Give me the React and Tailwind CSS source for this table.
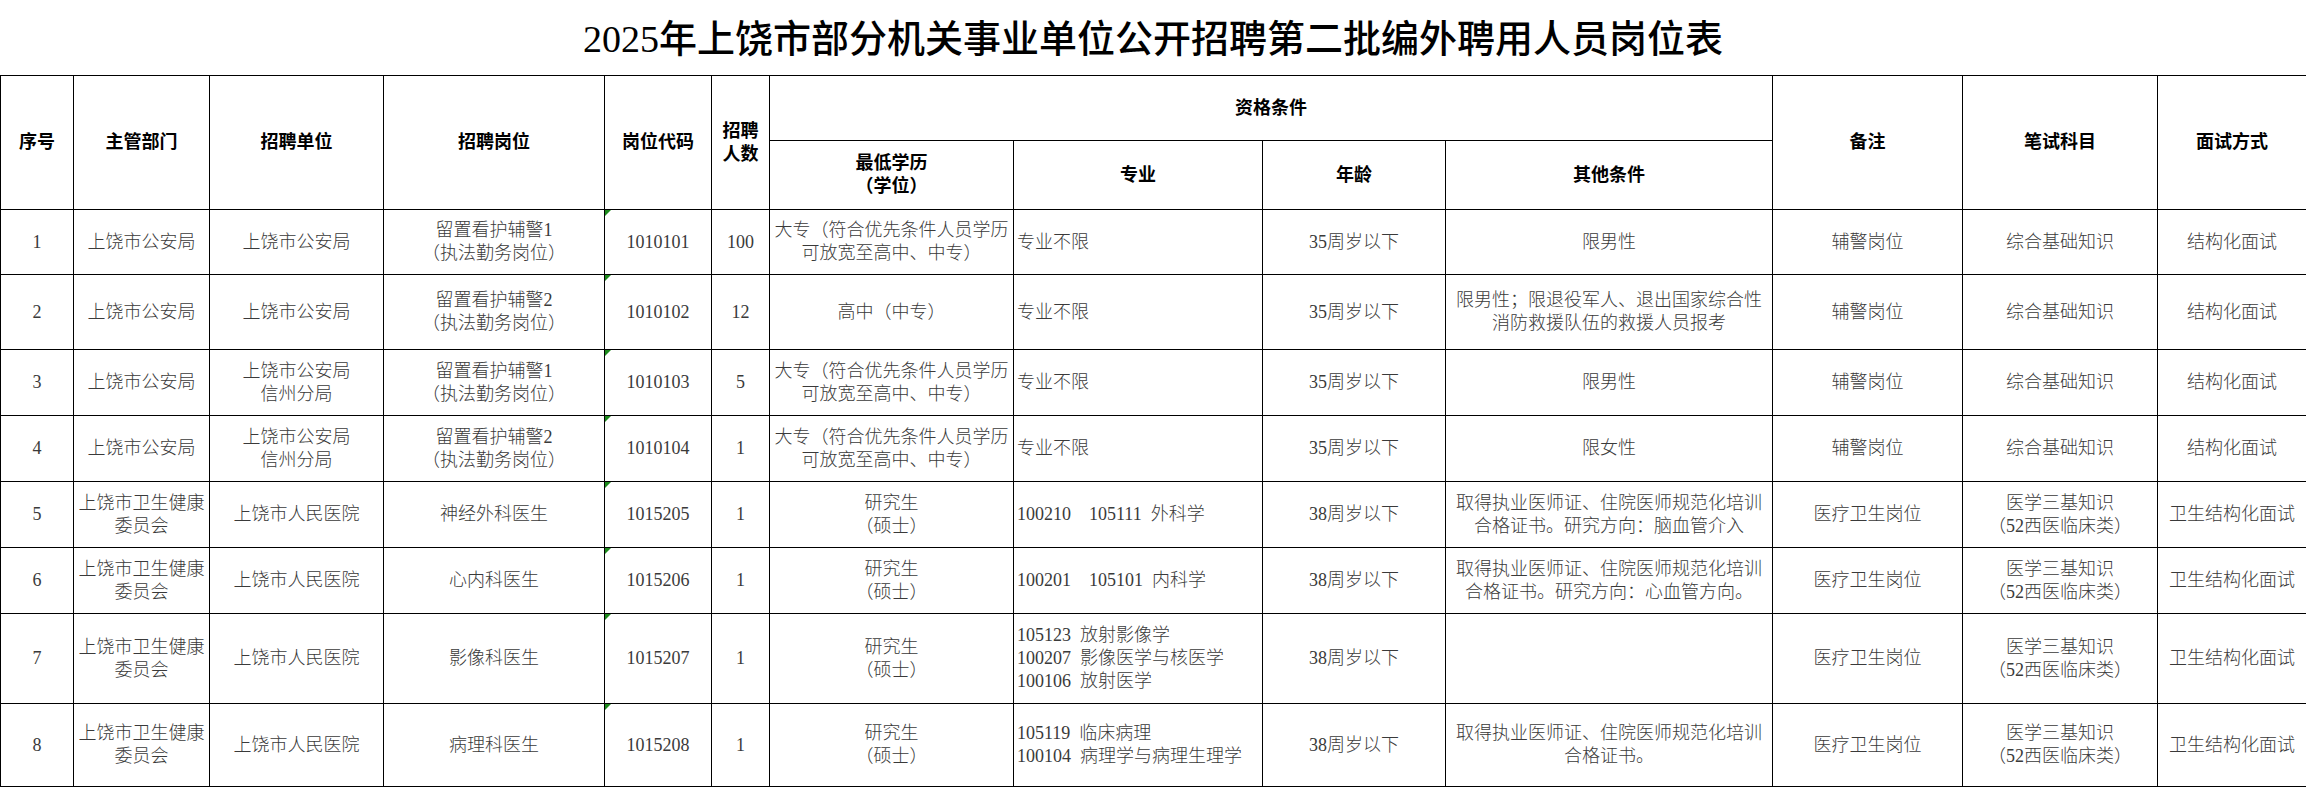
import React from "react";

const cols = [73, 136, 174, 221, 107, 58, 244, 249, 183, 327, 190, 195, 149];

const police = {
  dept: ["上饶市公安局"],
  exam: ["综合基础知识"],
  note: "辅警岗位",
  way: "结构化面试",
  age: "35周岁以下",
  major: ["专业不限"],
};

const health = {
  dept: ["上饶市卫生健康", "委员会"],
  unit: ["上饶市人民医院"],
  edu: ["研究生", "（硕士）"],
  exam: ["医学三基知识", "（52西医临床类）"],
  note: "医疗卫生岗位",
  way: "卫生结构化面试",
  age: "38周岁以下",
};

const dazhuan = ["大专（符合优先条件人员学历", "可放宽至高中、中专）"];
const cert = "取得执业医师证、住院医师规范化培训";

const rows = [
  { no: 1, h: 65, ...police, unit: ["上饶市公安局"], post: ["留置看护辅警1", "（执法勤务岗位）"], code: "1010101", num: "100", edu: dazhuan, other: ["限男性"] },
  { no: 2, h: 75, ...police, unit: ["上饶市公安局"], post: ["留置看护辅警2", "（执法勤务岗位）"], code: "1010102", num: "12", edu: ["高中（中专）"], other: ["限男性；限退役军人、退出国家综合性", "消防救援队伍的救援人员报考"] },
  { no: 3, h: 66, ...police, unit: ["上饶市公安局", "信州分局"], post: ["留置看护辅警1", "（执法勤务岗位）"], code: "1010103", num: "5", edu: dazhuan, other: ["限男性"] },
  { no: 4, h: 66, ...police, unit: ["上饶市公安局", "信州分局"], post: ["留置看护辅警2", "（执法勤务岗位）"], code: "1010104", num: "1", edu: dazhuan, other: ["限女性"] },
  { no: 5, h: 66, ...health, post: ["神经外科医生"], code: "1015205", num: "1", major: ["100210    105111  外科学"], other: [cert, "合格证书。研究方向：脑血管介入"] },
  { no: 6, h: 66, ...health, post: ["心内科医生"], code: "1015206", num: "1", major: ["100201    105101  内科学"], other: [cert, "合格证书。研究方向：心血管方向。"] },
  { no: 7, h: 90, ...health, post: ["影像科医生"], code: "1015207", num: "1", major: ["105123  放射影像学", "100207  影像医学与核医学", "100106  放射医学"], other: [] },
  { no: 8, h: 83, ...health, post: ["病理科医生"], code: "1015208", num: "1", major: ["105119  临床病理", "100104  病理学与病理生理学"], other: [cert, "合格证书。"] },
];

const Lines = ({ items }) => items.map((t, i) => <div key={i}>{t}</div>);

const Th = ({ children, ...rest }) => (
  <th className="border border-black p-0 text-[18px] leading-[23px] font-bold text-black text-center align-middle" {...rest}>
    {children}
  </th>
);

const Td = ({ children, left = false, flag = false }) => (
  <td
    className={`relative border border-black p-0 text-[18px] leading-[23px] font-light text-[#3a3a3a] align-middle whitespace-pre ${
      left ? "text-left pl-[3px]" : "text-center"
    }`}
  >
    {flag && (
      <span className="absolute left-0 top-0 w-0 h-0 border-t-[6px] border-r-[6px] border-t-[#1c8a1c] border-r-transparent" />
    )}
    {children}
  </td>
);

export default function App() {
  return (
    <div className="w-[2306px] h-[787px] bg-white overflow-hidden font-['Liberation_Serif','Noto_Sans_CJK_SC',serif]">
      <div className="h-[75px] pt-[4px] flex items-center justify-center text-[38px] font-medium text-black">
        2025年上饶市部分机关事业单位公开招聘第二批编外聘用人员岗位表
      </div>
      <table className="table-fixed border-collapse w-[2304px]">
        <colgroup>
          {cols.map((w, i) => (
            <col key={i} style={{ width: w }} />
          ))}
        </colgroup>
        <thead>
          <tr className="h-[65px]">
            <Th rowSpan={2}>序号</Th>
            <Th rowSpan={2}>主管部门</Th>
            <Th rowSpan={2}>招聘单位</Th>
            <Th rowSpan={2}>招聘岗位</Th>
            <Th rowSpan={2}>岗位代码</Th>
            <Th rowSpan={2}>
              <div>招聘</div>
              <div>人数</div>
            </Th>
            <Th colSpan={4}>资格条件</Th>
            <Th rowSpan={2}>备注</Th>
            <Th rowSpan={2}>笔试科目</Th>
            <Th rowSpan={2}>面试方式</Th>
          </tr>
          <tr className="h-[69px]">
            <Th>
              <div>最低学历</div>
              <div>（学位）</div>
            </Th>
            <Th>专业</Th>
            <Th>年龄</Th>
            <Th>其他条件</Th>
          </tr>
        </thead>
        <tbody>
          {rows.map((r) => (
            <tr key={r.no} style={{ height: r.h }}>
              <Td>{r.no}</Td>
              <Td><Lines items={r.dept} /></Td>
              <Td><Lines items={r.unit} /></Td>
              <Td><Lines items={r.post} /></Td>
              <Td flag>{r.code}</Td>
              <Td>{r.num}</Td>
              <Td><Lines items={r.edu} /></Td>
              <Td left><Lines items={r.major} /></Td>
              <Td>{r.age}</Td>
              <Td><Lines items={r.other} /></Td>
              <Td>{r.note}</Td>
              <Td><Lines items={r.exam} /></Td>
              <Td>{r.way}</Td>
            </tr>
          ))}
        </tbody>
      </table>
    </div>
  );
}
